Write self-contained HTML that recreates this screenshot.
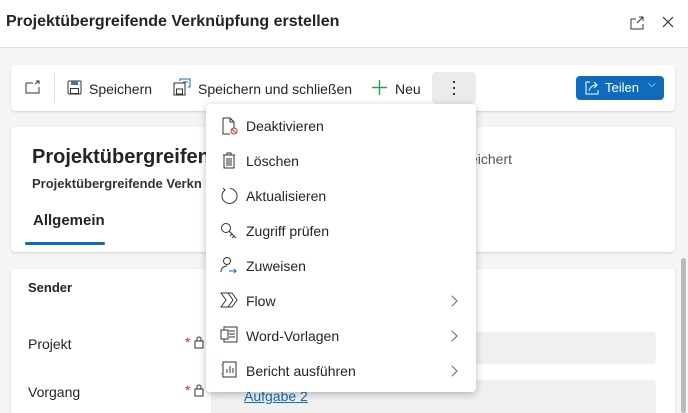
<!DOCTYPE html>
<html><head><meta charset="utf-8"><style>
*{box-sizing:border-box;margin:0;padding:0}
html,body{width:688px;height:413px;overflow:hidden}
body{background:#f5f5f5;font-family:"Segoe UI","Liberation Sans",sans-serif;color:#242424;position:relative}
.hdr{position:absolute;left:0;top:0;width:688px;height:48px;background:#fff;border-bottom:1px solid #e0e0e0}
.hdr h1{position:absolute;left:6px;top:13px;font-size:16px;font-weight:bold}
.card{position:absolute;left:11px;width:664px;background:#fff;border-radius:4px;box-shadow:0 1px 2px rgba(0,0,0,.15)}
.t{position:absolute;font-size:14px;white-space:nowrap}
.menu{position:absolute;left:206px;top:104px;width:270px;height:288px;background:#fff;border-radius:4px;box-shadow:0 2px 8px rgba(0,0,0,.25)}
.mi{position:absolute;left:40px;font-size:14px}
.chev{position:absolute;left:242px;width:8px;height:8px;border-right:1.3px solid #666;border-top:1.3px solid #666;transform:rotate(45deg)}
svg{position:absolute}
</style></head><body>
<div class="hdr"><h1>Projektübergreifende Verknüpfung erstellen</h1>
<svg style="left:630px;top:16px" width="14" height="14" viewBox="0 0 14 14" fill="none" stroke="#333" stroke-width="1"><path d="M1 3h5M1 3v10h12V8M7 7l6-6M9 1h4v4"/></svg>
<svg style="left:662px;top:16px" width="12" height="12" viewBox="0 0 12 12" stroke="#333" stroke-width="1.2"><path d="M1 1l10 10M11 1L1 11"/></svg>
</div>
<div class="card" style="top:65px;height:46px">
<svg style="left:14px;top:15px" width="16" height="14" viewBox="0 0 16 14" fill="none" stroke="#333"><path d="M1 3h7M1 3v10h13V7M10 4l4-3M11 1h3v3"/></svg>
<div style="position:absolute;left:43px;top:8px;width:1px;height:30px;background:#ddd"></div>
<svg style="left:56px;top:15px" width="15" height="15" viewBox="0 0 15 15" fill="none" stroke="#333"><rect x="1" y="1" width="13" height="13" rx="1"/><rect x="4" y="1" width="7" height="4" fill="#4a6fa5" stroke="none"/><rect x="3.5" y="8.5" width="8" height="5"/></svg>
<div class="t" style="left:78px;top:16px">Speichern</div>
<svg style="left:162px;top:13px" width="18" height="18" viewBox="0 0 18 18" fill="none" stroke="#333"><rect x="1" y="5" width="11" height="12"/><rect x="3.5" y="11" width="6" height="5"/><path d="M7 3V1h10v8h-2M10 4h5" stroke="#0f6cbd"/></svg>
<div class="t" style="left:187px;top:16px">Speichern und schließen</div>
<svg style="left:361px;top:15px" width="15" height="15" viewBox="0 0 15 15" stroke="#2e9e5b" stroke-width="1.4"><path d="M7.5 0v15M0 7.5h15"/></svg>
<div class="t" style="left:384px;top:16px">Neu</div>
<div style="position:absolute;left:421px;top:7px;width:44px;height:32px;background:#ebebeb;border-radius:4px"><div style="position:absolute;left:21px;top:9px;width:2px;height:2px;background:#333;box-shadow:0 6px #333,0 12px #333"></div></div>
<div style="position:absolute;left:565px;top:11px;width:88px;height:24px;background:#0f6cbd;border-radius:4px;color:#fff;font-size:13px">
<svg style="left:8px;top:4px" width="16" height="16" viewBox="0 0 16 16" fill="none" stroke="#fff"><path d="M6 2H2v12h12v-4"/><path d="M5 11c1-4 4-6 8-6M10 2l3 3-3 3"/></svg>
<span style="position:absolute;left:29px;top:4px">Teilen</span><span style="position:absolute;left:72px;top:3px;font-size:10px">⌵</span></div>
</div>
<div class="card" style="top:127px;height:125px">
<div class="t" style="left:21px;top:19px;font-size:20px;font-weight:bold">Projektübergreifende</div>
<div class="t" style="left:459px;top:24px;color:#555">eichert</div>
<div class="t" style="left:21px;top:49px;font-size:13px;font-weight:bold;color:#333">Projektübergreifende Verkn</div>
<div class="t" style="left:22px;top:85px;font-size:15px;font-weight:bold">Allgemein</div>
<div style="position:absolute;left:14px;top:115px;width:80px;height:3px;background:#0f6cbd;border-radius:2px"></div>
</div>
<div class="card" style="top:269px;height:160px">
<div class="t" style="left:17px;top:11px;font-size:13px;font-weight:bold">Sender</div>
<div class="t" style="left:17px;top:67px">Projekt</div>
<div class="t" style="left:17px;top:115px">Vorgang</div>
<div class="t" style="left:174px;top:65px;color:#c4314b">*</div>
<div class="t" style="left:174px;top:113px;color:#c4314b">*</div>
<svg style="left:183px;top:67px" width="10" height="13" viewBox="0 0 10 13" fill="none" stroke="#333"><rect x="1" y="5" width="8" height="7"/><path d="M3 5V3a2 2 0 0 1 4 0v2"/></svg>
<svg style="left:183px;top:115px" width="10" height="13" viewBox="0 0 10 13" fill="none" stroke="#333"><rect x="1" y="5" width="8" height="7"/><path d="M3 5V3a2 2 0 0 1 4 0v2"/></svg>
<div style="position:absolute;left:200px;top:63px;width:445px;height:32px;background:#f0f0f0;border-radius:4px"></div>
<div style="position:absolute;left:200px;top:111px;width:445px;height:40px;background:#f0f0f0;border-radius:4px"></div>
<div class="t" style="left:233px;top:119px;color:#0f6cbd;text-decoration:underline">Aufgabe 2</div>
</div>
<div style="position:absolute;left:681px;top:258px;width:5px;height:155px;background:#bbb;border-radius:3px"></div>
<div class="menu">
<svg style="left:15px;top:13px" width="18" height="18" viewBox="0 0 18 18" fill="none" stroke="#333"><path d="M2 1h7l4 4v6M2 1v16h7M9 1v4h4"/><circle cx="13" cy="14" r="3" stroke="#d13438"/><path d="M11 12l4 4" stroke="#d13438"/></svg>
<div class="mi" style="top:14px">Deaktivieren</div>
<svg style="left:16px;top:48px" width="14" height="17" viewBox="0 0 14 17" fill="none" stroke="#333"><path d="M1 3h12M5 3V1h4v2M2 3v13h10V3M5 6v8M7 6v8M9 6v8"/></svg>
<div class="mi" style="top:49px">Löschen</div>
<svg style="left:14px;top:83px" width="18" height="18" viewBox="0 0 18 18" fill="none" stroke="#333"><path d="M5 3a7.5 7.5 0 1 0 5-1.5M3 1l2 2-2 2"/></svg>
<div class="mi" style="top:84px">Aktualisieren</div>
<svg style="left:14px;top:118px" width="18" height="18" viewBox="0 0 18 18" fill="none" stroke="#333"><circle cx="6" cy="6" r="4.5"/><path d="M9 9l7 7M12 12l-2 2M14 14l-2 2"/></svg>
<div class="mi" style="top:119px">Zugriff prüfen</div>
<svg style="left:14px;top:152px" width="18" height="18" viewBox="0 0 18 18" fill="none" stroke="#333"><circle cx="7" cy="5" r="3.5"/><path d="M1 16c0-4 3-6 6-6"/><path d="M9 15h7M14 13l2 2-2 2" stroke="#0f6cbd"/></svg>
<div class="mi" style="top:154px">Zuweisen</div>
<svg style="left:14px;top:188px" width="18" height="16" viewBox="0 0 18 16" fill="none" stroke="#333"><path d="M1 1h7l5 7-5 7H1l5-7zM8 1h4l5 7-5 7H8"/></svg>
<div class="mi" style="top:189px">Flow</div><div class="chev" style="top:193px"></div>
<svg style="left:14px;top:222px" width="18" height="17" viewBox="0 0 18 17" fill="none" stroke="#333"><rect x="4" y="1" width="13" height="15"/><path d="M9 5h6M9 8h6M9 11h6"/><rect x="1" y="4" width="7" height="9" fill="#fff"/></svg>
<div class="mi" style="top:224px">Word-Vorlagen</div><div class="chev" style="top:228px"></div>
<svg style="left:14px;top:257px" width="18" height="17" viewBox="0 0 18 17" fill="none" stroke="#333"><rect x="3" y="1" width="13" height="15"/><path d="M7 12V8M10 12V5M13 12V7"/><path d="M1 4h2M1 13h2" stroke="#d47500"/></svg>
<div class="mi" style="top:259px">Bericht ausführen</div><div class="chev" style="top:263px"></div>
</div>
</body></html>
